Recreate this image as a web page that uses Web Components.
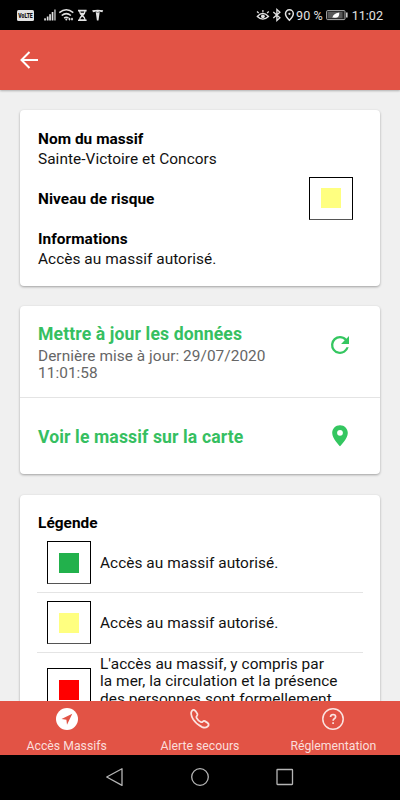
<!DOCTYPE html>
<html lang="fr"><head><meta charset="utf-8"><title>Accès Massifs</title>
<style>
html,body{margin:0;height:100%;overflow:hidden;background:#f0f0f0}
body{font-family:Roboto,"Liberation Sans",sans-serif}
</style></head><body>
<massif-app></massif-app>
<script>
const define=(name,css,html)=>customElements.define(name,class extends HTMLElement{
  constructor(){super();this.attachShadow({mode:'open'}).innerHTML='<style>*{box-sizing:border-box}svg{display:block}'+css+'</style>'+html;}
});

define('status-bar',`
:host{display:flex;align-items:center;justify-content:space-between;height:30px;flex:none;background:#000;color:#e2e2e2;padding:0 17.5px 0 17px;box-sizing:border-box}
div{display:flex;align-items:center}
span{font-size:12.6px;line-height:30px;white-space:pre;padding-top:1px}
`,`
<div>
<svg width="88" height="14" viewBox="17 8 88 14" fill="#e2e2e2">
<rect x="17" y="10" width="17" height="11" rx="1.5"/>
<text x="18.3" y="18" font-size="6.600" font-weight="900" textLength="14.400" lengthAdjust="spacingAndGlyphs" fill="#111">VoLTE</text>
<rect x="44.2" y="18.3" width="1.7" height="2.2"/><rect x="46.8" y="16.5" width="1.7" height="4"/><rect x="49.2" y="14.2" width="1.7" height="6.3"/><rect x="51.7" y="12" width="1.7" height="8.5"/><rect x="54.2" y="9.5" width="1.5" height="11" opacity=".8"/>
<g fill="none" stroke="#e2e2e2" stroke-width="1.5"><path d="M59.300 12.600q7-5.500 14 0M61.700 15.500q4.600-3.800 9.200 0M64.100 18.100q2.200-1.700 4.400 0"/></g><circle cx="66.300" cy="19.500" r="1"/><path d="M69.500 17.500l1.200 1.600-1.200 1.600-1.200-1.600zM72 17.500l1.200 1.600-1.200 1.600-1.200-1.600z"/>
<path d="M78 9.800h8.600v1.600h-1q-.3 2.700-2.200 4 1.900 1.300 2.200 4h1V21H78v-1.600h1q.3-2.700 2.200-4-1.900-1.300-2.200-4h-1z"/><path d="M80.300 19.200q.5-1.600 2-2.500 1.500.9 2 2.500zM80.300 11.500h4l-.5 1.200h-3z" fill="#000"/>
<path d="M92.200 10.300q5.500-1.200 11 0l-.8 2q-1.300-.6-2.700-.5l-1.200 8.700h-1.600l-1.200-8.700q-1.400-.1-2.700.5z"/><path d="M95.500 11.600l2.200.9 2.200-.9" fill="none" stroke="#000" stroke-width=".5"/>
</svg></div>
<div>
<svg width="40" height="14" viewBox="257 8 40 14" fill="none" stroke="#e2e2e2" stroke-width="1.300">
<path d="M258.300 16.500q5.500-6.200 11.200 0-5.700 5.200-11.200 0z"/><circle cx="263.900" cy="16.300" r="1.900" fill="#e2e2e2" stroke="none"/><path d="M258 11.500l1.700 1.500M263.900 10v2.200M269.800 11.500l-1.700 1.500" stroke-width="1.200"/>
<path d="M274.300 12l6.600 5.800-3 2.700V9.500l3 2.700-6.600 5.800" stroke-width="1.300"/>
<path d="M290.400 20.300q-3.900-4-3.900-6.600a3.900 3.900 0 0 1 7.800 0q0 2.600-3.900 6.600z" stroke-width="1.500"/><circle cx="290.400" cy="13.800" r="1.100" fill="#e2e2e2" stroke="none"/>
</svg><span style="margin-left:.5px">90 %</span>
<svg style="margin:0 4px 0 3px" width="22" height="12" viewBox="326 9 22 12"><rect x="326.600" y="10.600" width="18.400" height="9" rx="1" fill="#222" stroke="#aaa"/><rect x="328" y="12" width="14.500" height="6.200" fill="#585858"/><path d="M332.500 18q0-4.500 6.800-5.500.2 6.500-5.800 5z" fill="#fff"/><rect x="346" y="12.500" width="1.600" height="5" fill="#ccc"/></svg>
<span style="margin-right:-.5px">11:02</span></div>`);

define('app-header',`
:host{display:flex;align-items:center;height:60px;flex:none;background:#e25345;padding-left:19px;box-sizing:border-box;box-shadow:0 1px 2px #0004;z-index:1}
`,`<svg width="20" height="18" viewBox="0 0 20 18" fill="none" stroke="#fff" stroke-width="2"><path d="M10.500 1L2.500 9l8 8M2 9h17"/></svg>`);

define('ui-card',`:host{display:block;background:#fff;border-radius:4px;box-shadow:0 1px 2.500px #0005;box-sizing:border-box;flex:none}`,`<slot></slot>`);

define('risk-flag',`:host{display:grid;place-items:center;width:44px;height:43px;border:1px solid #000;border-bottom-color:#555;box-sizing:border-box;flex:none;background:#fff}
i{width:20px;height:20px;background:var(--c)}`,`<i></i>`);

define('massif-info',`:host{display:grid;grid-template-rows:20px 20px 60px 20px 20px;align-items:center;padding:19px 27px 0 18px;height:176px;box-sizing:border-box;font-size:15.400px;color:#111;line-height:20px}
b{font-weight:700;color:#000}b,span{justify-self:start;letter-spacing:var(--ls)}
div{display:flex;justify-content:space-between;align-items:center;height:43px}
`,`<b>Nom du massif</b><span>Sainte-Victoire et Concors</span>
<div><b>Niveau de risque</b><risk-flag style="--c:#ffff80;margin-top:-2px"></risk-flag></div>
<b>Informations</b><span>Accès au massif autorisé.</span>`);

define('action-row',`:host{display:flex;align-items:center;justify-content:space-between;padding:0 28px 0 18px;box-sizing:border-box}
section{width:252px}h2{margin:0;font-size:17.600px;line-height:20px;font-weight:700;color:#36bf61;letter-spacing:.12px}
p{margin:0;font-size:15.400px;line-height:17.500px;color:#666;letter-spacing:var(--ls)}
`,`<section><h2><slot name="title"></slot></h2><p><slot></slot></p></section><slot name="icon"></slot>`);

define('legend-row',`:host{display:flex;align-items:center;gap:9px;padding-left:10px;height:60px;box-sizing:border-box;border-bottom:1px solid #e4e4e4;font-size:15.400px;line-height:17.500px;color:#111;letter-spacing:var(--ls)}
span{padding-top:2px}
`,`<risk-flag></risk-flag><span><slot></slot></span>`);

define('tab-item',`:host{display:flex;flex-direction:column;align-items:center;flex:1;padding-top:7px;color:#fbdedb;font-size:12.250px;line-height:16px}
span{margin-top:8px;white-space:nowrap}`,`<slot name="icon"></slot><span><slot></slot></span>`);

define('tab-bar',`:host{display:flex;height:54px;flex:none;background:#e25345;z-index:1}svg{width:24px;height:22px}`,`
<tab-item><svg slot="icon" viewBox="0 0 24 22"><circle cx="12" cy="11" r="11" fill="#fff"/><path d="M17.300 5.800L6.500 10.900l4.900.8.600 5z" fill="#e25345"/></svg>Accès Massifs</tab-item>
<tab-item><svg slot="icon" viewBox="0 0 24 22" fill="none" stroke="#fbe4e1" stroke-width="1.900" stroke-linejoin="round"><path transform="translate(1 .7) scale(.93)" d="M3 2.500q1.300-1.500 2.800-1 1.500.7 3.200 4 .5 1.200-.5 2.200-1 1-.4 2.100 1.500 2.900 4.600 4.500 1.200.5 2.100-.5 1.100-1 2.300-.4 3.500 1.800 4 3.200.4 1.500-1.400 2.900-2.200 1.600-5.500.3Q8 17 4.500 11.500 1 5.500 3 2.500z"/></svg>Alerte secours</tab-item>
<tab-item><svg slot="icon" viewBox="0 0 24 22" fill="none" stroke="#fbe4e1" stroke-width="1.500"><circle cx="12" cy="11" r="10.200"/><path d="M9.500 9q.2-2.500 2.600-2.500 2.500.1 2.500 2.200 0 1.200-1.300 2-1.200.8-1.200 2.100M12.100 14.200v1.700" stroke-width="1.700"/></svg>Réglementation</tab-item>`);

define('nav-bar',`:host{display:flex;height:45px;flex:none;background:#000;justify-content:center}`,`
<svg width="200" height="45" viewBox="100 755 200 45" fill="none" stroke="#b5b5b5" stroke-width="1.300" stroke-linejoin="round"><path d="M122 768.800v16.600L106.700 777z"/><circle cx="200" cy="777" r="8.300"/><rect x="277" y="769.500" width="15.500" height="15" rx=".5"/></svg>`);

define('massif-app',`:host{display:flex;flex-direction:column;height:800px;width:400px;background:#f0f0f0;--ls:.05px}
main{flex:1;min-height:0;overflow:hidden;padding:20px 20px 0;display:flex;flex-direction:column;gap:20px}
h3{margin:0;padding-left:1px;font-size:15.400px;line-height:20px;color:#000;letter-spacing:var(--ls)}
.stamp{display:block;padding-top:4px}
.actions action-row:first-child{height:92px;padding-top:3px;border-bottom:1px solid #e4e4e4}
.actions action-row:last-child{height:76px}
.legend{padding:18px 17px;margin-top:1px}
.legend legend-row:last-child{height:73px;border:0}
`,`<status-bar></status-bar><app-header></app-header>
<main>
<ui-card><massif-info></massif-info></ui-card>
<ui-card class="actions">
<action-row><span slot="title">Mettre à jour les données</span><span class="stamp">Dernière mise à jour: 29/07/2020<br>11:01:58</span>
<svg slot="icon" style="margin-top:-17px" width="24" height="24" viewBox="0 0 24 24" fill="#34c660"><path d="M18.400 5.700C16.800 4 14.500 3 12 3a9 9 0 1 0 8.700 11.300h-2.300A6.750 6.750 0 1 1 12 5.250c1.900 0 3.500.8 4.700 2L13.100 10.900H21V3z"/></svg></action-row>
<action-row><span slot="title" style="position:relative;top:1px">Voir le massif sur la carte</span>
<svg slot="icon" width="24" height="24" viewBox="0 0 24 24" fill="#34c660"><path d="M12 1.200C7.500 1.200 4.200 4.700 4.200 9c0 5.700 7.800 13.300 7.800 13.300S19.800 14.700 19.800 9c0-4.300-3.300-7.800-7.800-7.800zm0 10.500a2.900 2.900 0 1 1 0-5.800 2.900 2.900 0 0 1 0 5.800z"/></svg></action-row>
</ui-card>
<ui-card class="legend"><h3>Légende</h3>
<legend-row style="--c:#22b14c">Accès au massif autorisé.</legend-row>
<legend-row style="--c:#ffff80">Accès au massif autorisé.</legend-row>
<legend-row style="--c:#f00">L'accès au massif, y compris par<br>la mer, la circulation et la présence<br>des personnes sont formellement<br>interdits.</legend-row>
</ui-card>
</main><tab-bar></tab-bar><nav-bar></nav-bar>`);
</script>
</body></html>
